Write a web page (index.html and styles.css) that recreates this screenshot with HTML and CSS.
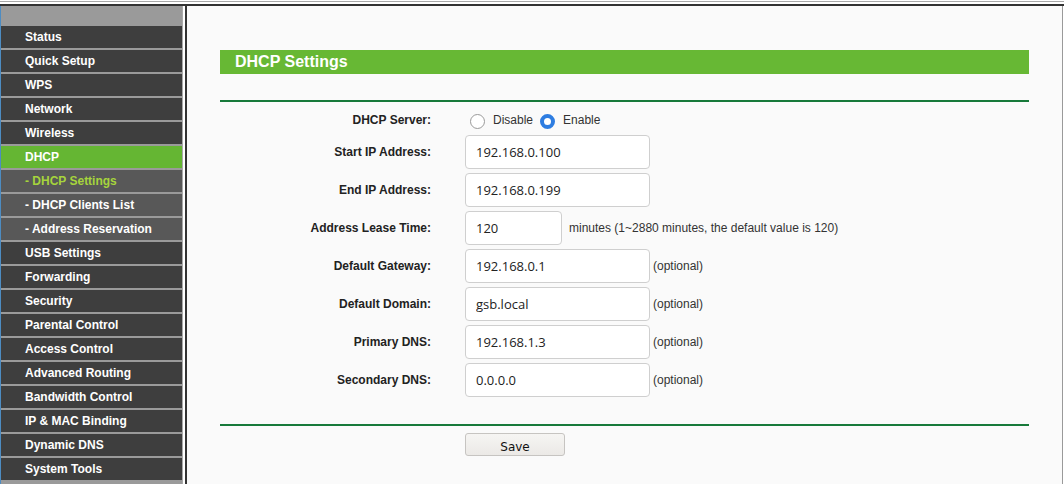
FILE: index.html
```html
<!DOCTYPE html>
<html>
<head>
<meta charset="utf-8">
<title>DHCP Settings</title>
<link rel="stylesheet" href="styles.css">
</head>
<body>
<div class="topbar"></div>
<div class="main">
  <nav class="sidebar">
    <div class="side-head"></div>
    <a class="item">Status</a>
    <a class="item">Quick Setup</a>
    <a class="item">WPS</a>
    <a class="item">Network</a>
    <a class="item">Wireless</a>
    <a class="item item-active">DHCP</a>
    <a class="item sub sub-active">- DHCP Settings</a>
    <a class="item sub">- DHCP Clients List</a>
    <a class="item sub">- Address Reservation</a>
    <a class="item">USB Settings</a>
    <a class="item">Forwarding</a>
    <a class="item">Security</a>
    <a class="item">Parental Control</a>
    <a class="item">Access Control</a>
    <a class="item">Advanced Routing</a>
    <a class="item">Bandwidth Control</a>
    <a class="item">IP &amp; MAC Binding</a>
    <a class="item">Dynamic DNS</a>
    <a class="item">System Tools</a>
  </nav>
  <div class="divider"></div>
  <main class="content">
    <div class="title-bar">DHCP Settings</div>
    <div class="rule rule-top"></div>
    <form class="form">
      <div class="row row-radio">
        <label class="label">DHCP Server:</label>
        <div class="field">
          <input class="radio" type="radio" name="srv" id="dis">
          <label class="radio-text" for="dis">Disable</label>
          <input class="radio" type="radio" name="srv" id="en" checked>
          <label class="radio-text" for="en">Enable</label>
        </div>
      </div>
      <div class="row">
        <label class="label">Start IP Address:</label>
        <div class="field"><input class="text" type="text" value="192.168.0.100"></div>
      </div>
      <div class="row">
        <label class="label">End IP Address:</label>
        <div class="field"><input class="text" type="text" value="192.168.0.199"></div>
      </div>
      <div class="row">
        <label class="label">Address Lease Time:</label>
        <div class="field"><input class="text text-short" type="text" value="120"><span class="hint hint-wide">minutes (1~2880 minutes, the default value is 120)</span></div>
      </div>
      <div class="row">
        <label class="label">Default Gateway:</label>
        <div class="field"><input class="text" type="text" value="192.168.0.1"><span class="hint">(optional)</span></div>
      </div>
      <div class="row">
        <label class="label">Default Domain:</label>
        <div class="field"><input class="text" type="text" value="gsb.local"><span class="hint">(optional)</span></div>
      </div>
      <div class="row">
        <label class="label">Primary DNS:</label>
        <div class="field"><input class="text" type="text" value="192.168.1.3"><span class="hint">(optional)</span></div>
      </div>
      <div class="row">
        <label class="label">Secondary DNS:</label>
        <div class="field"><input class="text" type="text" value="0.0.0.0"><span class="hint">(optional)</span></div>
      </div>
      <div class="rule rule-bottom"></div>
      <div class="actions">
        <button class="save" type="button">Save</button>
      </div>
    </form>
  </main>
  <div class="edge"></div>
</div>
</body>
</html>
```

FILE: styles.css
```css
html, body {
  margin: 0;
  padding: 0;
  height: 484px;
  overflow: hidden;
  background: #ffffff;
}

body {
  font-family: "Liberation Sans", Arial, sans-serif;
}

.topbar {
  margin-top: 1px;
  height: 2px;
  border-top: 1px solid #a8a8a8;
  border-bottom: 2px solid #333333;
  background: #ffffff;
}

.main {
  display: flex;
  height: 478px;
}

.sidebar {
  width: 181px;
  flex: none;
  border-left: 1px solid #4d8cc2;
  background: #9a9a9a;
  display: flex;
  flex-direction: column;
}

.side-head {
  height: 20px;
  flex: none;
}

.item {
  display: block;
  flex: none;
  height: 22px;
  line-height: 22px;
  border-bottom: 2px solid #9a9a9a;
  background: #3e3e3e;
  color: #ffffff;
  font-size: 12px;
  font-weight: bold;
  padding-left: 24px;
  white-space: nowrap;
}

.item-active {
  background: #65b633;
}

.sub {
  background: #585858;
}

.sub-active {
  color: #a6d43c;
}

.divider {
  width: 2px;
  flex: none;
  border-left: 1px solid #aaaaaa;
  border-right: 2px solid #333333;
  background: #ffffff;
}

.content {
  width: 809px;
  flex: none;
  background: #fafafa;
  padding: 0 33px;
  border-right: 1px solid #9a9a9a;
}

.edge {
  flex: 1;
  background: #ffffff;
}

.title-bar {
  margin-top: 44px;
  height: 24px;
  line-height: 24px;
  background: #67b834;
  color: #ffffff;
  font-size: 16px;
  font-weight: bold;
  padding-left: 15px;
}

.rule {
  height: 0;
  border-top: 2px solid #17793a;
}

.rule-top {
  margin-top: 26px;
}

.form {
  margin: 0;
  display: flex;
  flex-direction: column;
}

.row {
  display: flex;
  align-items: center;
  height: 34px;
  margin-bottom: 4px;
}

.row-radio {
  height: 30px;
  margin-top: 3px;
  margin-bottom: 0;
}

.label {
  width: 211px;
  flex: none;
  margin-right: 34px;
  text-align: right;
  font-size: 12px;
  font-weight: bold;
  color: #222222;
}

.field {
  display: flex;
  align-items: center;
}

.radio {
  -webkit-appearance: none;
  appearance: none;
  box-sizing: border-box;
  width: 15px;
  height: 15px;
  margin: 2px 8px 0 5px;
  border: 1px solid #9a9a9a;
  border-radius: 50%;
  background: #ffffff;
}

.radio:checked {
  border: 4px solid #2e7de1;
}

.radio-text {
  font-size: 12px;
  color: #333333;
}

.radio-text + .radio {
  margin-left: 7px;
}

.text {
  box-sizing: border-box;
  width: 185px;
  height: 34px;
  margin: 0;
  padding: 0 10px;
  border: 1px solid #cfcfcf;
  border-radius: 4px;
  background: #ffffff;
  font-family: "Open Sans", "Noto Sans", sans-serif;
  font-size: 13px;
  color: #222222;
  outline: none;
}

.text-short {
  width: 97px;
}

.hint {
  margin-left: 3px;
  font-size: 12px;
  color: #333333;
  white-space: nowrap;
}

.hint-wide {
  margin-left: 7px;
}

.rule-bottom {
  margin-top: 23px;
}

.actions {
  display: flex;
  padding-left: 245px;
  margin-top: 7px;
}

.save {
  box-sizing: border-box;
  width: 100px;
  height: 23px;
  padding: 4px 0 0;
  border: 1px solid #c6c4c1;
  border-radius: 3px;
  background: linear-gradient(#f6f5f3, #ebe9e6);
  font-family: "DejaVu Sans", sans-serif;
  font-size: 12px;
  line-height: 16px;
  color: #111111;
}
```
